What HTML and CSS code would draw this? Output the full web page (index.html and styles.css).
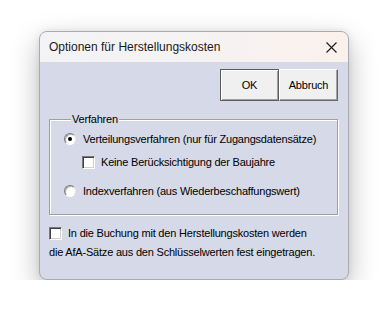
FILE: index.html
```html
<!DOCTYPE html>
<html lang="de">
<head>
    <meta charset="UTF-8">
    <title>Optionen für Herstellungskosten</title>
    <link rel="stylesheet" href="styles.css">
</head>
<body>
    <div class="window">
        <div class="titlebar">
            <span class="title">Optionen für Herstellungskosten</span>
            <span class="close">
                <svg width="11" height="11" viewBox="0 0 11 11"><path d="M0.5 0.5 L10.5 10.5 M10.5 0.5 L0.5 10.5" stroke="#1a1a1a" stroke-width="1.1" fill="none"/></svg>
            </span>
        </div>
        <div class="content">
            <div class="buttons">
                <button class="btn default">OK</button>
                <button class="btn">Abbruch</button>
            </div>

            <fieldset class="group">
                <legend>Verfahren</legend>
                <label class="option first"><span class="radio checked"></span>Verteilungsverfahren (nur für Zugangsdatensätze)</label>
                <label class="option sub"><span class="check"></span>Keine Berücksichtigung der Baujahre</label>
                <label class="option last"><span class="radio"></span>Indexverfahren (aus Wiederbeschaffungswert)</label>
            </fieldset>

            <div class="note">
                <label class="option"><span class="check"></span>In die Buchung mit den Herstellungskosten werden</label>
                <div class="note-line">die AfA-Sätze aus den Schlüsselwerten fest eingetragen.</div>
            </div>
        </div>
    </div>
</body>
</html>
```

FILE: styles.css
```css
body {
    margin: 0;
    padding: 31px 0 0 39px;
    background: #fff;
    font-family: "Liberation Sans", Arial, sans-serif;
}
.window {
    width: 308px;
    height: 247px;
    border: 1px solid #a9abb3;
    border-radius: 8px;
    overflow: hidden;
    background: #d5d9e8;
    box-shadow: 0 10px 28px rgba(0,0,0,0.28), 0 0 6px rgba(0,0,0,0.08);
}
.titlebar {
    height: 30px;
    display: flex;
    align-items: center;
    justify-content: space-between;
    padding: 0 10px 0 9px;
    background: linear-gradient(to right, #f3f3f5, #f6f2f2 60%, #fbf1ec);
}
.title {
    font-size: 12px;
    color: #1a1a1a;
}
.close {
    display: flex;
    margin-right: 1px;
}
.content {
    padding: 7px 10px 0 9px;
    font-size: 11px;
    letter-spacing: -0.2px;
    color: #000;
}
.buttons {
    display: flex;
    justify-content: flex-end;
}
.btn {
    height: 32px;
    width: 59px;
    padding: 0;
    font-family: "Liberation Sans", Arial, sans-serif;
    font-size: 11px;
    font-weight: normal;
    letter-spacing: -0.2px;
    color: #000;
    background: #f0f0f0;
    border: 1px solid;
    border-color: #fff #696969 #696969 #fff;
    box-shadow: inset -1px -1px 0 #a0a0a0;
}
.btn.default {
    border-color: #5c5c5c;
    box-shadow: inset 1px 1px 0 #fff, inset -1px -1px 0 #a0a0a0;
}
.group {
    margin: 12px 0 0 0;
    padding: 0 0 0 14px;
    height: 100px;
    border: 1px solid #a0a0a0;
    box-shadow: 1px 1px 0 #fff, inset 1px 1px 0 #fff;
}
.group legend {
    padding: 0 1px 0 1px;
    margin-left: 7px;
    background: #d5d9e8;
    line-height: 12px;
}
.option {
    display: flex;
    align-items: center;
    height: 16px;
}
.group .first {
    margin-top: 6px;
}
.group .sub {
    margin-top: 7px;
    padding-left: 18px;
}
.group .last {
    margin-top: 13px;
}
.radio {
    width: 12px;
    height: 12px;
    border-radius: 50%;
    box-sizing: border-box;
    margin-right: 7px;
    background: #fff;
    border: 1px solid;
    border-color: #7a7a7a #e8e8e8 #ffffff #7a7a7a;
    box-shadow: inset 1px 1px 0 #b0b0b0;
    display: flex;
    align-items: center;
    justify-content: center;
}
.radio.checked::after {
    content: "";
    width: 4px;
    height: 4px;
    border-radius: 50%;
    background: #000;
}
.check {
    width: 13px;
    height: 13px;
    box-sizing: border-box;
    margin-right: 6px;
    background: #fff;
    border: 1px solid;
    border-color: #7a7a7a #ffffff #ffffff #7a7a7a;
    box-shadow: inset 1px 1px 0 #404040, inset -1px -1px 0 #d4d0c8;
}
.note {
    margin-top: 10px;
}
.note-line {
    margin-top: 3px;
    height: 16px;
    line-height: 16px;
}
```
